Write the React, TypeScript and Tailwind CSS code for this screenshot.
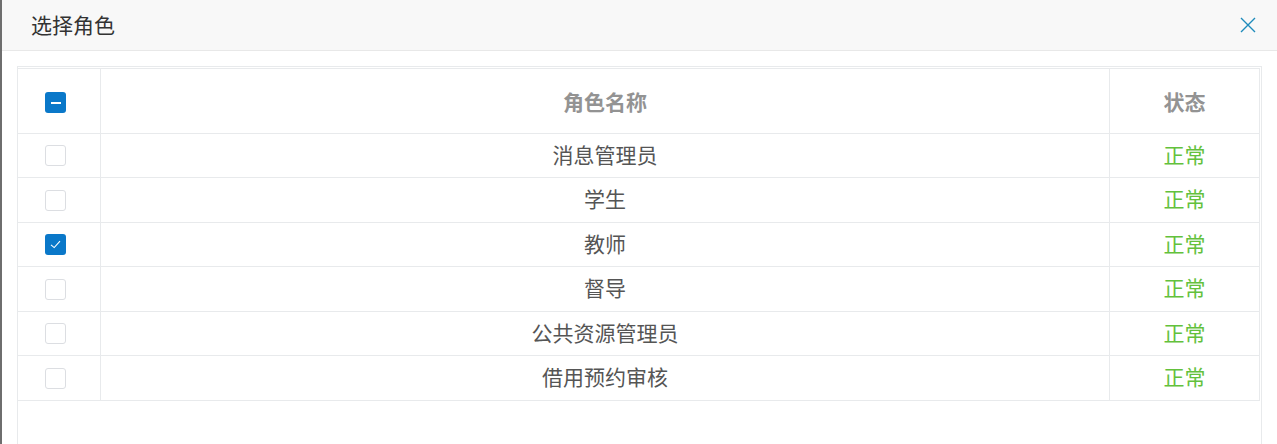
import React, { useState } from 'react';

type Role = { id: number; name: string; status: string };

const roles: Role[] = [
  { id: 1, name: '消息管理员', status: '正常' },
  { id: 2, name: '学生', status: '正常' },
  { id: 3, name: '教师', status: '正常' },
  { id: 4, name: '督导', status: '正常' },
  { id: 5, name: '公共资源管理员', status: '正常' },
  { id: 6, name: '借用预约审核', status: '正常' },
];

const FONT = { fontFamily: '"Microsoft YaHei", "Noto Sans CJK SC", "Noto Sans", sans-serif' };

function Checkbox({ state }: { state: 'on' | 'off' | 'some' }) {
  if (state === 'off') {
    return <span className="block w-[21px] h-[21px] rounded-[3px] border border-[#dcdee2] bg-white" />;
  }
  return (
    <span className="flex w-[21px] h-[21px] rounded-[3px] bg-[#0a78c9] items-center justify-center">
      {state === 'some' ? (
        <span className="block w-[10px] h-[2px] bg-white" />
      ) : (
        <svg width="15" height="15" viewBox="0 0 15 15" fill="none">
          <path d="M3 7.8 L6.2 10.6 L12 4.2" stroke="white" strokeWidth="1.1" />
        </svg>
      )}
    </span>
  );
}

export default function App() {
  const [checked, setChecked] = useState<number[]>([3]);

  const toggle = (id: number) =>
    setChecked(c => (c.includes(id) ? c.filter(x => x !== id) : [...c, id]));

  const all = checked.length === roles.length;

  return (
    <div className="w-[1277px] h-[444px] flex bg-white overflow-hidden" style={FONT}>
      <div className="w-[2px] bg-[#6e6e6e]" />
      <div className="flex-1 flex flex-col">
        {/* Header */}
        <div className="h-[51px] shrink-0 flex items-center justify-between bg-[#f8f8f8] border-b border-[#e8e8e8] pl-[29px] pr-[21px]">
          <span className="text-[21px] text-[#333] leading-none pb-px">选择角色</span>
          <button className="w-[16px] h-[16px]">
            <svg width="16" height="16" viewBox="0 0 16 16">
              <path d="M1 1 L15 15 M15 1 L1 15" stroke="#1e8bbb" strokeWidth="1.4" />
            </svg>
          </button>
        </div>

        {/* Body */}
        <div className="flex-1 flex flex-col px-[15px] pt-[15px]">
          <div className="flex-1 border border-b-0 border-[#e8eaec]">
            <div className="mt-px mr-px border-t border-r border-[#e8eaec]">
              <div className="grid grid-cols-[83px_1fr_149px] h-[65px] border-b border-[#e8eaec] font-bold text-[21px] leading-none text-[#939393]">
                <div className="flex items-center pl-[27px] pt-[3px] border-r border-[#e8eaec]">
                  <button onClick={() => setChecked(all ? [] : roles.map(r => r.id))}>
                    <Checkbox state={all ? 'on' : checked.length ? 'some' : 'off'} />
                  </button>
                </div>
                <div className="flex items-center justify-center border-r border-[#e8eaec]">角色名称</div>
                <div className="flex items-center justify-center">状态</div>
              </div>
              {roles.map((r, i) => (
                <div
                  key={r.id}
                  className={`grid grid-cols-[83px_1fr_149px] border-b border-[#e8eaec] text-[21px] leading-none ${i % 2 === 0 ? 'h-[44px]' : 'h-[45px]'}`}
                >
                  <div className="flex items-center pl-[27px] border-r border-[#e8eaec]">
                    <button onClick={() => toggle(r.id)}>
                      <Checkbox state={checked.includes(r.id) ? 'on' : 'off'} />
                    </button>
                  </div>
                  <div className="flex items-center justify-center pb-[3px] text-[#555] border-r border-[#e8eaec]">{r.name}</div>
                  <div className="flex items-center justify-center pb-[3px] text-[#63c13c]">{r.status}</div>
                </div>
              ))}
            </div>
          </div>
        </div>
      </div>
    </div>
  );
}
